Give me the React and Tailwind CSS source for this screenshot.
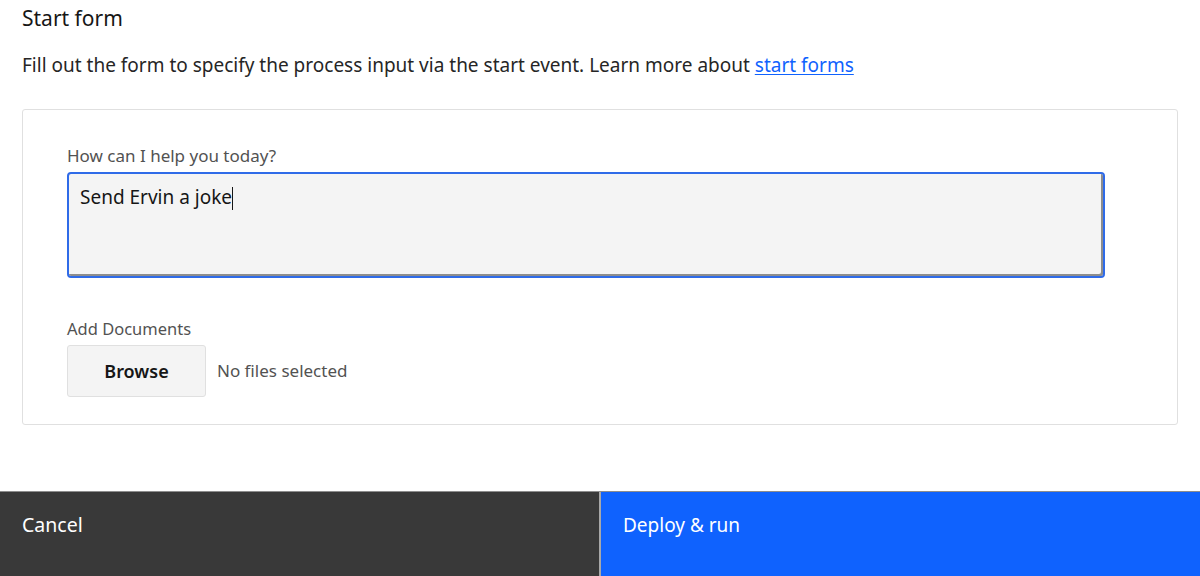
import React from 'react';

export default function App() {
  const font = { fontFamily: '"Noto Sans", "Open Sans", sans-serif' };
  return (
    <div className="w-[1200px] h-[576px] bg-white flex flex-col text-[#161616]" style={font}>
      <main className="flex-grow px-[22px]">
        {/* Header */}
        <h1 className="pt-[4px] text-[21px] leading-[28px]">Start form</h1>
        <p className="mt-[20px] text-[19px] leading-[26px] text-[#262626]">
          Fill out the form to specify the process input via the start event. Learn more about{' '}
          <a href="#" className="text-[#0f62fe] underline underline-offset-2">start forms</a>
        </p>

        {/* Form card */}
        <div className="mt-[31px] h-[316px] border border-[#e0e0e0] rounded-[3px] pl-[44px] pr-[72px] pt-[34px]">
          <label className="block text-[17px] leading-[23px] text-[#525252]">How can I help you today?</label>
          <div className="mt-[5px] h-[106px] bg-[#f4f4f4] border-2 border-[#2f6be8] rounded-[4px] shadow-[inset_-2px_-2px_0_#8d8d8d] px-[11px] pt-[10px]">
            <span className="text-[19px] leading-[26px] text-[#161616]">Send Ervin a joke</span>
            <span className="inline-block w-[1px] h-[23px] bg-[#161616] align-middle -mt-[2px]"></span>
          </div>

          <label className="block mt-[40px] text-[16.5px] leading-[22px] text-[#525252]">Add Documents</label>
          <div className="mt-[5px] flex items-center gap-[11px]">
            <button className="w-[139px] h-[52px] bg-[#f4f4f4] border border-[#e0e0e0] rounded-[3px] text-[18px] font-semibold text-[#161616]">
              Browse
            </button>
            <span className="text-[17px] text-[#525252]">No files selected</span>
          </div>
        </div>
      </main>

      {/* Footer actions */}
      <footer className="h-[85px] flex border-t border-[#8d8d8d]">
        <button className="w-[601px] bg-[#393939] text-white text-[19.5px] text-left px-[22px] pb-[18px] border-r-2 border-[#a8a8a8]">
          Cancel
        </button>
        <button className="flex-1 bg-[#0f62fe] text-white text-[19px] text-left px-[22px] pb-[18px]">
          Deploy &amp; run
        </button>
      </footer>
    </div>
  );
}
